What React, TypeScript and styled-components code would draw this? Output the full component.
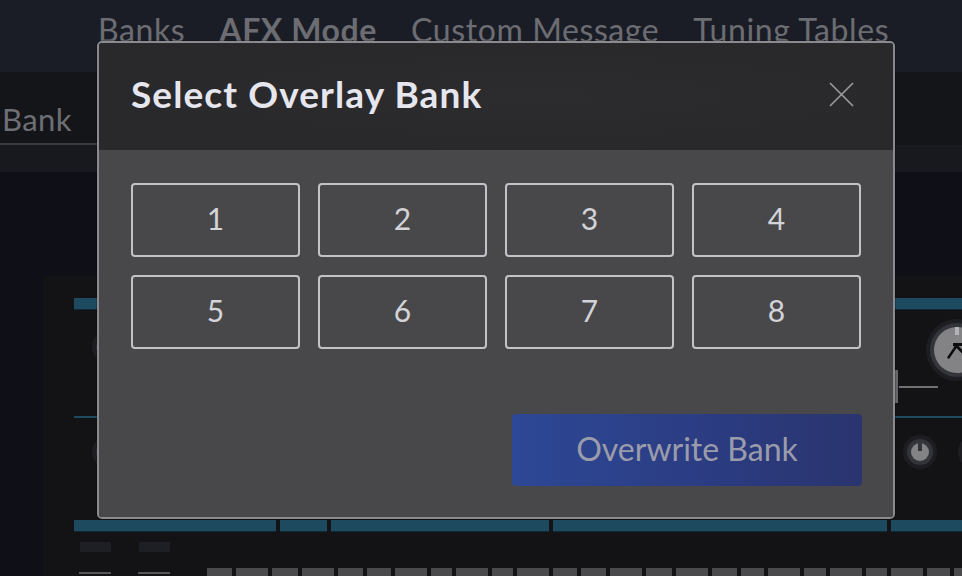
import React from "react";
import styled, { createGlobalStyle } from "styled-components";

const GlobalStyle = createGlobalStyle`
  html, body {
    margin: 0;
    padding: 0;
    background: #0e0f17;
    overflow: hidden;
  }
  body {
    font-family: Lato, "Open Sans", sans-serif;
  }
`;

const Page = styled.div`
  position: relative;
  width: 962px;
  height: 576px;
  overflow: hidden;
  background: #0e0f17;
`;

const Header = styled.div`
  height: 72px;
  background: #1b1d26;
  display: flex;
  align-items: flex-start;
  gap: 34px;
  padding-left: 98px;
  box-sizing: border-box;
`;

const Tab = styled.div<{ $active?: boolean }>`
  font-size: 32px;
  line-height: 1;
  margin-top: 14px;
  letter-spacing: 0.6px;
  color: #6c6d72;
  font-weight: ${(p) => (p.$active ? 700 : 400)};
  white-space: nowrap;
`;

const SubBar = styled.div`
  height: 100px;
  background: #141519;
  display: flex;
  flex-direction: column;
`;

const BankLabel = styled.div`
  height: 73px;
  width: 97px;
  box-sizing: border-box;
  border-bottom: 2px solid #3a3b40;
  padding: 32px 0 0 2px;
  font-size: 31px;
  line-height: 1;
  letter-spacing: 0.4px;
  color: #6e6f74;
`;

const SubStrip = styled.div`
  flex: 1;
  background: #18191e;
`;

const Stage = styled.div`
  padding: 104px 0 0 44px;
`;

const Panel = styled.div`
  width: 944px;
  height: 310px;
  background: #131315;
  padding: 22px 0 0 30px;
  box-sizing: border-box;
  display: flex;
  flex-direction: column;
`;

const TealBar = styled.div`
  height: 11px;
  flex-shrink: 0;
  background: #1d4a5e;
  border-bottom: 1px solid #0d2a36;
`;

const KnobRow = styled.div<{ $h: number }>`
  height: ${(p) => p.$h}px;
  flex-shrink: 0;
  display: flex;
  align-items: flex-start;
`;

const Divider = styled.div`
  height: 2px;
  flex-shrink: 0;
  background: #1d4a5e;
`;

const Knob = styled.div<{ $size: number; $left: number; $top: number }>`
  width: ${(p) => p.$size}px;
  height: ${(p) => p.$size}px;
  margin-left: ${(p) => p.$left}px;
  margin-top: ${(p) => p.$top}px;
  flex-shrink: 0;
  border-radius: 50%;
  background: #1e1e22;
  display: flex;
  align-items: center;
  justify-content: center;
`;

const KnobRing = styled.div<{ $inset: number }>`
  width: calc(100% - ${(p) => p.$inset * 2}px);
  height: calc(100% - ${(p) => p.$inset * 2}px);
  border-radius: 50%;
  background: #34353b;
  display: flex;
  align-items: center;
  justify-content: center;
`;

const KnobFace = styled.div<{ $inset: number }>`
  position: relative;
  width: calc(100% - ${(p) => p.$inset * 2}px);
  height: calc(100% - ${(p) => p.$inset * 2}px);
  border-radius: 50%;
  background: #838386;
  display: flex;
  align-items: center;
  justify-content: center;
`;

const Notch = styled.div<{ $light?: boolean }>`
  position: absolute;
  top: 0;
  left: 50%;
  width: 4px;
  height: 8px;
  margin-left: -2px;
  background: ${(p) => (p.$light ? "#b4b4b8" : "#34353b")};
`;

const RightGroup = styled.div`
  margin-left: 769px;
  padding-top: 9px;
  width: 93px;
  display: flex;
  flex-direction: column;
`;

const Slider = styled.div`
  display: flex;
  align-items: center;
  margin-top: -11px;
`;

const SliderThumb = styled.div`
  width: 3px;
  height: 33px;
  background: #66666a;
`;

const SliderLine = styled.div`
  width: 39px;
  height: 2px;
  margin-left: 1px;
  background: #727276;
`;

const SegBar = styled.div`
  height: 12px;
  flex-shrink: 0;
  display: flex;
  gap: 4px;
`;

const Seg = styled.div<{ $w: number }>`
  width: ${(p) => p.$w}px;
  flex-shrink: 0;
  background: #1d4a5e;
  border-bottom: 1px solid #0d2a36;
  box-sizing: border-box;
`;

const BottomRow = styled.div`
  flex: 1;
  display: flex;
  align-items: stretch;
`;

const MiniCtl = styled.div<{ $left: number }>`
  width: 32px;
  margin-left: ${(p) => p.$left}px;
  display: flex;
  flex-direction: column;
  align-items: center;
  padding-top: 10px;
`;

const MiniBox = styled.div`
  width: 31px;
  height: 10px;
  background: #1e1f24;
`;

const MiniLine = styled.div`
  width: 32px;
  height: 2px;
  margin-top: 20px;
  background: #56565a;
`;

const Keys = styled.div`
  margin-left: 37px;
  padding-top: 36px;
  display: flex;
  gap: 4px;
`;

const Key = styled.div<{ $w: number }>`
  width: ${(p) => p.$w}px;
  height: 20px;
  flex-shrink: 0;
  background: #4a4a4c;
`;

const Modal = styled.div`
  position: absolute;
  left: 97px;
  top: 41px;
  width: 798px;
  height: 478px;
  box-sizing: border-box;
  border: 2px solid #8a8a8f;
  border-radius: 5px;
  overflow: hidden;
  display: flex;
  flex-direction: column;
  box-shadow: 0 0 0 1px rgba(0, 0, 0, 0.2);
`;

const ModalHeader = styled.div`
  height: 107px;
  box-sizing: border-box;
  background: radial-gradient(ellipse at 55% 50%, #2c2c2e 0%, #29292b 70%);
  display: flex;
  align-items: center;
  justify-content: space-between;
  padding: 0 39px 6px 32px;
`;

const Title = styled.h2`
  margin: 0;
  font-size: 37px;
  font-weight: 700;
  color: #e6e6ee;
  letter-spacing: 1.1px;
`;

const CloseButton = styled.button`
  width: 25px;
  height: 25px;
  padding: 0;
  margin-top: 2px;
  border: none;
  background: none;
  cursor: pointer;
  display: flex;
`;

const ModalBody = styled.div`
  flex: 1;
  background: #48484b;
  padding: 33px 32px 31px;
  display: flex;
  flex-direction: column;
`;

const BankGrid = styled.div`
  display: grid;
  grid-template-columns: repeat(4, 169px);
  grid-auto-rows: 74px;
  gap: 18px;
`;

const BankButton = styled.button`
  box-sizing: border-box;
  border: 2px solid #c3c3c7;
  border-radius: 4px;
  background: #48484b;
  color: #d3d3d8;
  font-family: Lato, "Open Sans", sans-serif;
  font-size: 30px;
  font-weight: 400;
  padding: 0 0 5px;
  cursor: pointer;
`;

const Footer = styled.div`
  margin-top: 65px;
  display: flex;
  justify-content: flex-end;
`;

const OverwriteButton = styled.button`
  width: 350px;
  height: 72px;
  margin-right: -1px;
  border: none;
  border-radius: 4px;
  background: linear-gradient(90deg, #2d4896 0%, #2b3b80 60%, #2a356f 100%);
  color: #9b9cab;
  font-family: Lato, "Open Sans", sans-serif;
  font-size: 32px;
  padding: 0 0 3px;
  cursor: pointer;
`;

const segments = [202, 47, 218, 334, 96];
const keyWidths = [
  25, 32, 26, 32, 25, 24, 32, 21, 32, 21, 32, 24, 25, 32, 26, 32, 25, 23, 32,
  22, 32, 21, 32, 23, 32,
];
const banks = [1, 2, 3, 4, 5, 6, 7, 8];

const AfxGlyph = () => (
  <svg width="26" height="26" viewBox="0 0 26 26">
    <path
      d="M9 6 L20 6 L20 9 L14.5 9 L20 14.5 L18 16.5 L12.5 11 L5 22 L3 20.5 L10.5 9.5 L9 9 Z"
      fill="#0c0c0e"
    />
  </svg>
);

export default function App() {
  return (
    <Page>
      <GlobalStyle />
      <Header>
        <Tab>Banks</Tab>
        <Tab $active>AFX Mode</Tab>
        <Tab>Custom Message</Tab>
        <Tab>Tuning Tables</Tab>
      </Header>
      <SubBar>
        <BankLabel>Bank</BankLabel>
        <SubStrip />
      </SubBar>
      <Stage>
        <Panel>
          <TealBar />
          <KnobRow $h={106}>
            <Knob $size={34} $left={18} $top={20}>
              <KnobRing $inset={4}>
                <KnobFace $inset={4} />
              </KnobRing>
            </Knob>
            <RightGroup>
              <Knob $size={62} $left={31} $top={0}>
                <KnobRing $inset={4}>
                  <KnobFace $inset={4}>
                    <Notch $light />
                    <AfxGlyph />
                  </KnobFace>
                </KnobRing>
              </Knob>
              <Slider>
                <SliderThumb />
                <SliderLine />
              </Slider>
            </RightGroup>
          </KnobRow>
          <Divider />
          <KnobRow $h={102}>
            <Knob $size={34} $left={18} $top={17}>
              <KnobRing $inset={4}>
                <KnobFace $inset={5} />
              </KnobRing>
            </Knob>
            <Knob $size={34} $left={777} $top={17}>
              <KnobRing $inset={4}>
                <KnobFace $inset={4}>
                  <Notch />
                </KnobFace>
              </KnobRing>
            </Knob>
            <Knob $size={34} $left={21} $top={17}>
              <KnobRing $inset={4}>
                <KnobFace $inset={4}>
                  <Notch />
                </KnobFace>
              </KnobRing>
            </Knob>
          </KnobRow>
          <SegBar>
            {segments.map((w, i) => (
              <Seg key={i} $w={w} />
            ))}
          </SegBar>
          <BottomRow>
            <MiniCtl $left={5}>
              <MiniBox />
              <MiniLine />
            </MiniCtl>
            <MiniCtl $left={27}>
              <MiniBox />
              <MiniLine />
            </MiniCtl>
            <Keys>
              {keyWidths.map((w, i) => (
                <Key key={i} $w={w} />
              ))}
            </Keys>
          </BottomRow>
        </Panel>
      </Stage>

      <Modal>
        <ModalHeader>
          <Title>Select Overlay Bank</Title>
          <CloseButton aria-label="Close">
            <svg width="25" height="25" viewBox="0 0 25 25">
              <path
                d="M1 1 L24 24 M24 1 L1 24"
                stroke="#9c9ca0"
                strokeWidth="1.6"
                fill="none"
              />
            </svg>
          </CloseButton>
        </ModalHeader>
        <ModalBody>
          <BankGrid>
            {banks.map((n) => (
              <BankButton key={n}>{n}</BankButton>
            ))}
          </BankGrid>
          <Footer>
            <OverwriteButton>Overwrite Bank</OverwriteButton>
          </Footer>
        </ModalBody>
      </Modal>
    </Page>
  );
}
